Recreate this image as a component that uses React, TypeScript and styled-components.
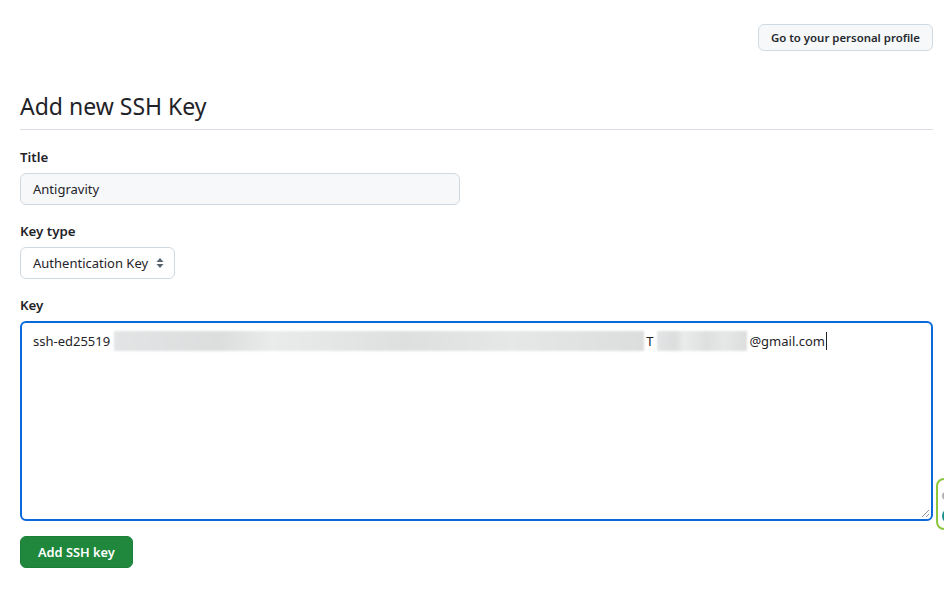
import styled, { createGlobalStyle } from "styled-components";

const GlobalStyle = createGlobalStyle`
  html, body {
    margin: 0;
    padding: 0;
    background: #ffffff;
    overflow: hidden;
  }
  body {
    font-family: "Noto Sans", "Liberation Sans", sans-serif;
    color: #1f2328;
  }
`;

const Page = styled.div`
  position: relative;
  width: 944px;
  height: 599px;
  box-sizing: border-box;
  padding: 24px 11px 0 20px;
`;

const TopBar = styled.div`
  display: flex;
  justify-content: flex-end;
`;

const Button = styled.button<{ $primary?: boolean }>`
  font-family: inherit;
  font-size: ${(p) => (p.$primary ? "12.8px" : "11.4px")};
  font-weight: 600;
  line-height: 20px;
  height: ${(p) => (p.$primary ? "32px" : "27px")};
  padding: 0 ${(p) => (p.$primary ? "17px" : "12px")};
  border-radius: 6px;
  border: 1px solid ${(p) => (p.$primary ? "#1a7f37" : "#d1d9e0")};
  background: ${(p) => (p.$primary ? "#1f883d" : "#f6f8fa")};
  color: ${(p) => (p.$primary ? "#ffffff" : "#25292e")};
  cursor: pointer;
`;

const Heading = styled.h2`
  margin: 37px 0 17px;
  padding-bottom: 5px;
  font-size: 23px;
  font-weight: 400;
  line-height: 36px;
  border-bottom: 1px solid #d8dee4;
`;

const Field = styled.div`
  display: flex;
  flex-direction: column;
  align-items: flex-start;
  margin-top: 16px;
`;

const Label = styled.label`
  font-size: 13.3px;
  font-weight: 600;
  line-height: 20px;
  margin-bottom: 6px;
`;

const TextInput = styled.div`
  box-sizing: border-box;
  width: 440px;
  height: 32px;
  padding: 0 12px;
  display: flex;
  align-items: center;
  font-size: 13px;
  background: #f6f8fa;
  border: 1px solid #d1d9e0;
  border-radius: 6px;
`;

const Select = styled.div`
  box-sizing: border-box;
  height: 32px;
  padding: 0 10px 0 12px;
  display: flex;
  align-items: center;
  gap: 8px;
  font-size: 13px;
  background: #ffffff;
  border: 1px solid #d1d9e0;
  border-radius: 6px;
`;

const KeyArea = styled.div`
  position: relative;
  box-sizing: border-box;
  width: 100%;
  height: 200px;
  padding: 8px 11px;
  border: 2px solid #0969da;
  border-radius: 6px;
  font-size: 13px;
  line-height: 20px;
  display: flex;
  align-items: flex-start;
`;

const Blur = styled.span<{ $w: number }>`
  display: inline-block;
  width: ${(p) => p.$w}px;
  height: 20px;
  margin: 0 2px 0 4px;
  background: linear-gradient(
    90deg,
    #e3e4e5 0%,
    #dcdddd 20%,
    #eaebeb 30%,
    #dedfdf 55%,
    #e6e7e7 75%,
    #dcdddd 100%
  );
  filter: blur(1px);
`;

const Caret = styled.span`
  display: inline-block;
  width: 1px;
  height: 18px;
  margin-top: 1px;
  margin-left: 1px;
  background: #1f2328;
`;

const Grip = styled.svg`
  position: absolute;
  right: 1px;
  bottom: 1px;
`;

const Actions = styled.div`
  margin-top: 15px;
`;

const Widget = styled.div`
  position: absolute;
  left: 936px;
  top: 478px;
  width: 40px;
  height: 52px;
  box-sizing: border-box;
  border: 2px solid #8cc63f;
  border-radius: 8px;
  background: #ffffff;
`;

const WidgetDot = styled.span<{ $top: number; $color: string; $size: number }>`
  position: absolute;
  left: 4px;
  top: ${(p) => p.$top}px;
  width: ${(p) => p.$size}px;
  height: ${(p) => p.$size}px;
  border-radius: 50%;
  border: 2px solid ${(p) => p.$color};
`;

export default function App() {
  return (
    <Page>
      <GlobalStyle />
      <TopBar>
        <Button>Go to your personal profile</Button>
      </TopBar>
      <Heading>Add new SSH Key</Heading>
      <Field>
        <Label>Title</Label>
        <TextInput>Antigravity</TextInput>
      </Field>
      <Field>
        <Label>Key type</Label>
        <Select>
          Authentication Key
          <svg width="8" height="12" viewBox="0 0 8 12">
            <path d="M4 1 L7.5 5 H0.5 Z M4 11 L0.5 7 H7.5 Z" fill="#59636e" />
          </svg>
        </Select>
      </Field>
      <Field>
        <Label>Key</Label>
        <KeyArea>
          ssh-ed25519
          <Blur $w={530} />
          T
          <Blur $w={90} />
          @gmail.com
          <Caret />
          <Grip width="10" height="10" viewBox="0 0 10 10">
            <path d="M9 2 L2 9 M9 6 L6 9" stroke="#8c959f" strokeWidth="1" />
          </Grip>
        </KeyArea>
      </Field>
      <Actions>
        <Button $primary>Add SSH key</Button>
      </Actions>
      <Widget>
        <WidgetDot $top={12} $color="#b0b0b0" $size={4} />
        <WidgetDot $top={28} $color="#1a8f8a" $size={12} />
      </Widget>
    </Page>
  );
}
